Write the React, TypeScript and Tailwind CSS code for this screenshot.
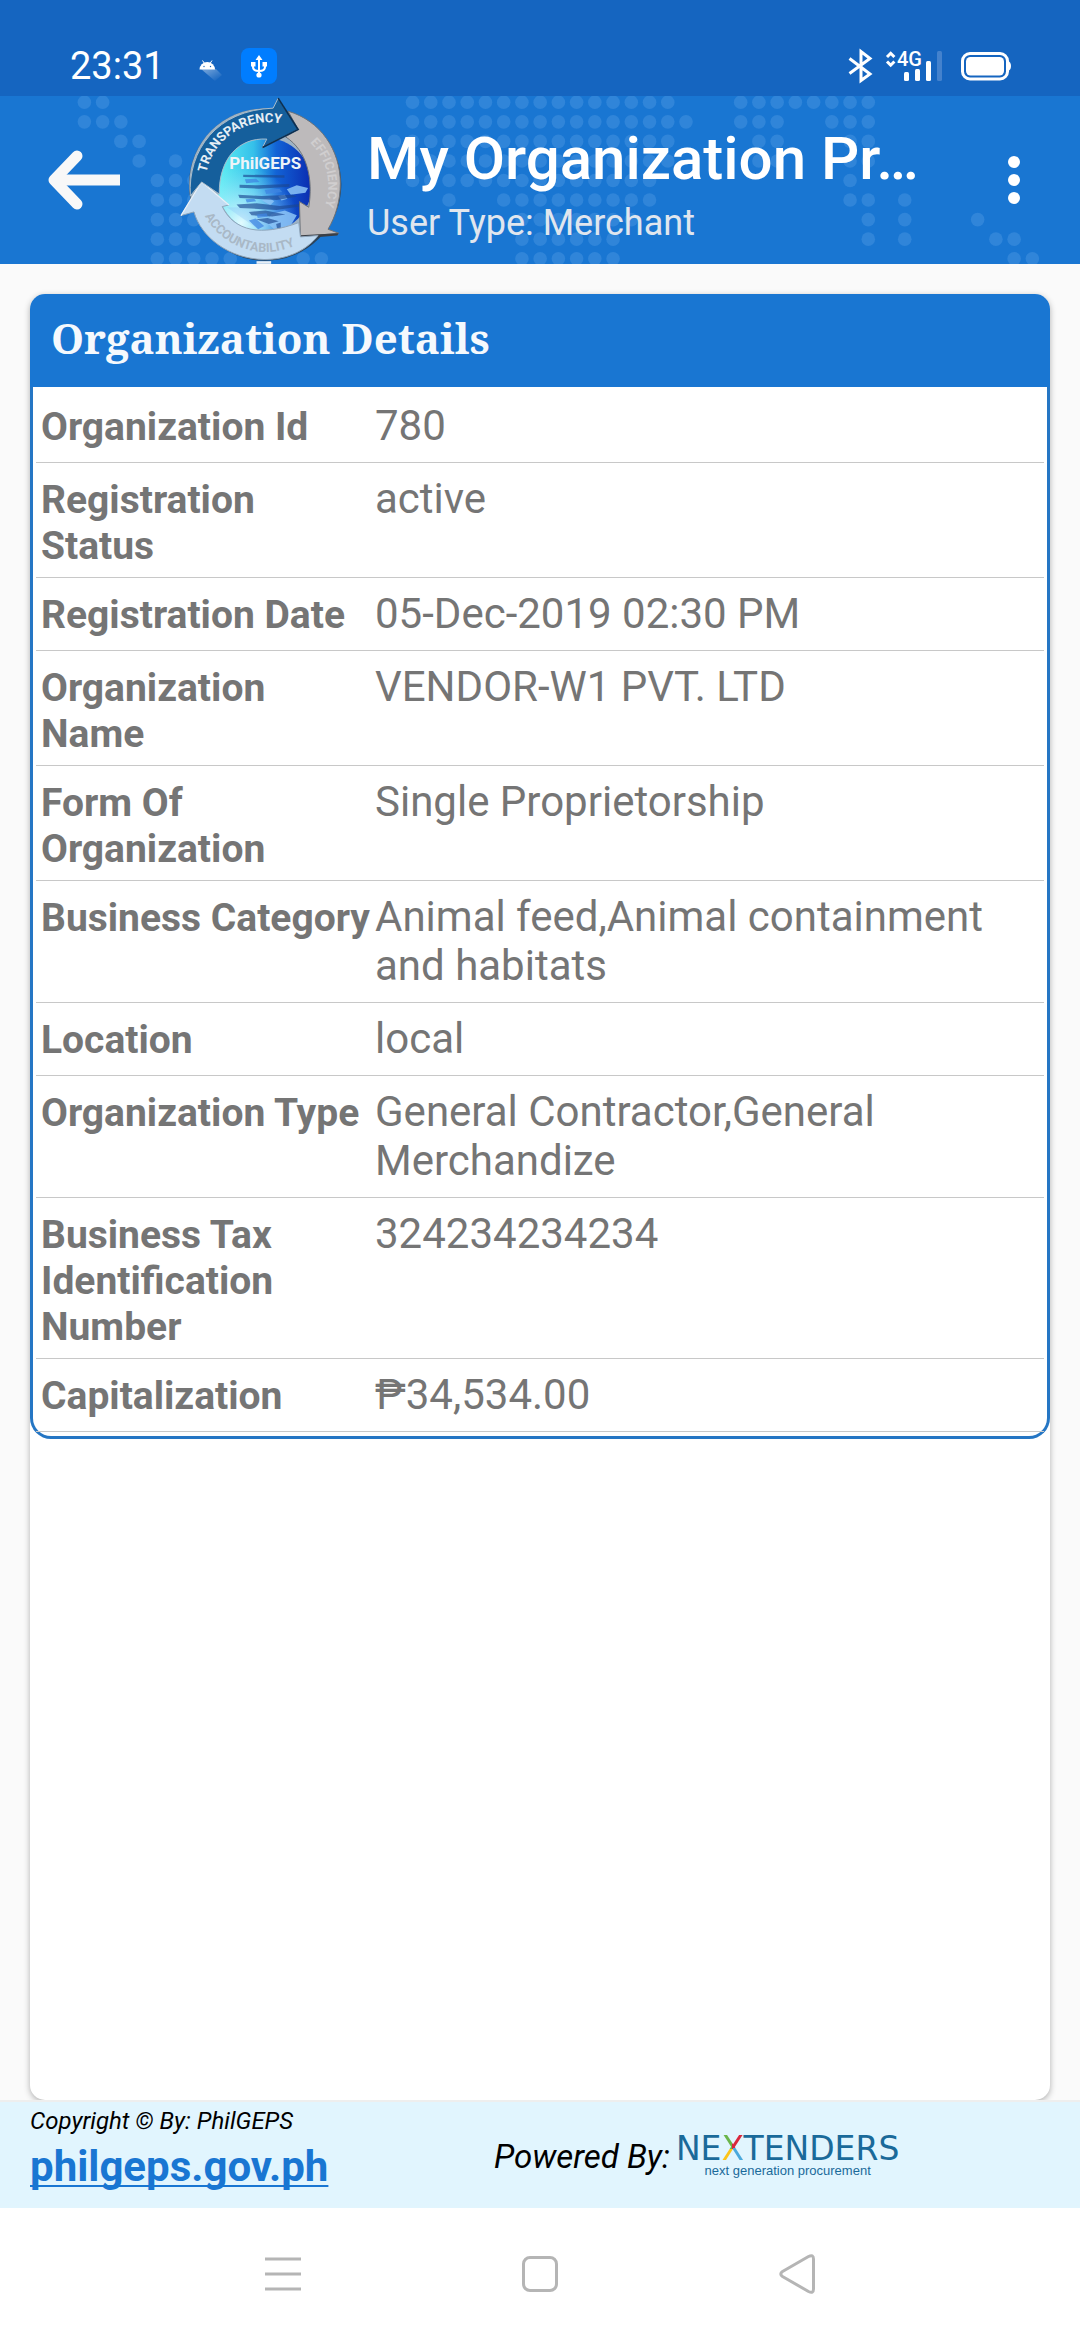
import React from "react";

type Row = { label: string; value: string };

const rows: Row[] = [
  { label: "Organization Id", value: "780" },
  { label: "Registration Status", value: "active" },
  { label: "Registration Date", value: "05-Dec-2019 02:30 PM" },
  { label: "Organization Name", value: "VENDOR-W1 PVT. LTD" },
  { label: "Form Of Organization", value: "Single Proprietorship" },
  { label: "Business Category", value: "Animal feed,Animal containment and habitats" },
  { label: "Location", value: "local" },
  { label: "Organization Type", value: "General Contractor,General Merchandize" },
  { label: "Business Tax Identification Number", value: "324234234234" },
  { label: "Capitalization", value: "₱34,534.00" },
];

// Column ranges of the dotted world map, one list per dot row.
const mapDots: [number, number][][] = [
  [[0, 1], [18, 32], [36, 43]],
  [[0, 2], [18, 33], [36, 38], [41, 43]],
  [[2, 3], [17, 32], [37, 38], [42, 43]],
  [[3, 3], [5, 5], [18, 32], [37, 38], [42, 43]],
  [[4, 6], [18, 31], [42, 42]],
  [[4, 6], [20, 20], [23, 31], [42, 43], [45, 45]],
  [[4, 6], [24, 30], [43, 43], [45, 45], [49, 49]],
  [[4, 6], [24, 29], [43, 43], [45, 45], [50, 51]],
  [[4, 8], [12, 13], [24, 29], [51, 52]],
];

function MapDots() {
  return (
    <svg
      className="absolute inset-0 h-full w-full"
      viewBox="0 0 1080 168"
      preserveAspectRatio="xMidYMid slice"
      fill="#3085d9"
      aria-hidden="true"
    >
      {mapDots.map((ranges, r) =>
        ranges.map(([from, to]) =>
          Array.from({ length: to - from + 1 }, (_, i) => (
            <circle key={`${r}-${from + i}`} cx={84.4 + (from + i) * 18.23} cy={6.3 + r * 19.55} r={6.8} />
          )),
        ),
      )}
    </svg>
  );
}

function StatusBar() {
  return (
    <div className="flex h-24 items-start justify-between bg-[#1565c0] pt-[42px] pr-[66px] pl-[70px] text-white">
      <div className="flex h-12 items-center">
        <span className="text-[38px] leading-[48px]">23:31</span>
        <svg className="ml-[34px] h-8 w-6" viewBox="0 0 24 32" aria-hidden="true">
          <defs>
            <linearGradient id="droidShade" x1="0" y1="0" x2="1" y2="1">
              <stop offset="0.2" stopColor="#fff" stopOpacity="0.35" />
              <stop offset="0.9" stopColor="#fff" stopOpacity="0" />
            </linearGradient>
          </defs>
          <path d="M2 19H17L23 25L16 31Z" fill="url(#droidShade)" />
          <path d="M0.500 19.500a7.700 7.500 0 0 1 15.500 0z" fill="#fff" />
          <path d="M3.500 10.500l2 3M13 10.500l-2 3" stroke="#fff" strokeWidth="1" />
          <circle cx="5" cy="16.500" r="0.700" fill="#1565c0" />
          <circle cx="11.500" cy="16.500" r="0.700" fill="#1565c0" />
        </svg>
        <svg className="ml-[18px] h-9 w-9" viewBox="0 0 36 36" aria-hidden="true">
          <rect width="36" height="36" rx="8" fill="#007dff" />
          <g fill="none" stroke="#fff" strokeWidth="2">
            <path d="M18 10V27M12 17v2c0 3 2.500 4 6 4s6-1 6-4v-2" />
          </g>
          <path d="M18 7l3.500 5h-7zM10 14h4.500v4.500H10zM21.500 14H26v4.500h-4.500z" fill="#fff" />
          <circle cx="18" cy="27" r="2.600" fill="#fff" />
        </svg>
      </div>
      <svg className="h-12 w-[166px]" viewBox="848 42 166 48" aria-hidden="true">
        <path d="M849.500 58.500L870 74L861 80.500V51.500L870 58.500L849.500 73.500" fill="none" stroke="#fff" strokeWidth="3" />
        <path d="M887 57l3.700-3.700L894.400 57M887 61.500l3.700 3.700l3.700-3.700" fill="none" stroke="#fff" strokeWidth="3" />
        <text x="897" y="66" fill="#fff" fontSize="20" fontWeight="500">4G</text>
        <rect x="904" y="72" width="5" height="9" rx="1.500" fill="#fff" />
        <rect x="915" y="69" width="5" height="12" rx="1.500" fill="#fff" />
        <rect x="926" y="61" width="5" height="20" rx="1.500" fill="#fff" />
        <rect x="937" y="51" width="5" height="30" rx="1.500" fill="#4482cd" />
        <rect x="962.500" y="53.500" width="45" height="25.500" rx="7.500" fill="none" stroke="#fff" strokeWidth="3" />
        <rect x="966" y="57" width="38" height="18.500" rx="4.500" fill="#fff" />
        <path d="M1008 61q3 1 3 5t-3 5z" fill="#fff" />
      </svg>
    </div>
  );
}

function SealLogo() {
  return (
    <svg className="h-[168px] w-[163px] shrink-0" viewBox="55 18 490 504" role="img" aria-label="PhilGEPS">
      <defs>
        <linearGradient id="globe" x1="0" y1="0.300" x2="1" y2="0.300">
          <stop offset="0" stopColor="#5ff0f2" />
          <stop offset="0.38" stopColor="#35c0ea" />
          <stop offset="0.62" stopColor="#1263d6" />
          <stop offset="1" stopColor="#0a2bb0" />
        </linearGradient>
        <radialGradient id="globeLight" cx="0.250" cy="0.900" r="0.600">
          <stop offset="0" stopColor="#e2fbff" />
          <stop offset="1" stopColor="#9fe6ff" stopOpacity="0" />
        </radialGradient>
        <path id="sealTop" d="M134 248A190 190 0 0 1 380 106" />
        <path id="sealRight" d="M446 158A180 180 0 0 1 478 375" />
        <path id="sealBottom" d="M130 378A208 208 0 0 0 430 450" />
      </defs>
      <path d="M285 514h44v8h-44z" fill="#e8eef4" />
      <circle cx="311" cy="284" r="229" fill="#2c4257" />
      <circle cx="309" cy="281" r="226" fill="#9fb3c4" />
      <circle cx="310" cy="285" r="142" fill="url(#globe)" />
      <circle cx="310" cy="285" r="142" fill="url(#globeLight)" />
      <g fill="#8cc4f7" opacity="0.850">
        <path d="M196 352l94 66 26-8 22-18-40-28-60-12z" opacity="0.400" />
        <path d="M376 298l30-12 34 8-8 14-44 6zM330 372l40-10 36 14-20 34-44 12-26-24z" />
        <path d="M300 330l24-6 14 10-12 12zM350 318l20-4 8 12-18 6z" />
      </g>
      <g fill="#1c4690" opacity="0.650">
        <path d="M245 254l124 2v7l-124-2zM234 284l54 2 96-4v8l-92 6-58-3zM230 314l70 4 94-4 12 6-60 10-112-6zM225 344l60-4 70 8 60-6v8l-70 10-110-6zM262 366l50-4 60 12-40 6-62-4zM284 388l34-4 34 10-30 8zM344 402l14-4v20l-10 4z" />
      </g>
      <g fill="#3f86e2" opacity="0.750">
        <path d="M250 268l34-2 10 10-40 4zM310 300l44-4 8 10-48 6zM252 328l26-2 6 8-28 4zM285 374l30-4 4 10-30 4zM262 392l20-6 26 22-18 10z" />
      </g>
      <path d="M380 63C478 92 537 180 537 280C537 332 523 380 500 418L532 430L417 441L414 335L442 352C456 268 438 182 372 140L410 118Z" fill="#bdbabb" stroke="#6d7279" strokeWidth="3" />
      <path d="M417 436L532 430L528 437L420 446Z" fill="#3b3f46" />
      <path d="M120 275L202 345L182 350C218 425 300 440 412 398L417 441L470 437C430 488 370 509 308 509C200 507 118 440 97 366L58 377Z" fill="#c3dcf2" stroke="#8fa5ba" strokeWidth="3" />
      <path d="M58 377L120 275L202 345" fill="none" stroke="#e9f2fa" strokeWidth="4" />
      <path d="M86 318C78 180 165 60 335 54L350 24L410 118L303 172L316 147C232 142 172 205 173 312L120 276Z" fill="#155f9c" stroke="#a9bccb" strokeWidth="3" />
      <path d="M350 24L410 118L303 172" fill="none" stroke="#0b2f52" strokeWidth="5" />
      <text fill="#e6eef5" fontSize="39" fontWeight="700">
        <textPath href="#sealTop">TRANSPARENCY</textPath>
      </text>
      <text fill="#d0cecf" fontSize="38" fontWeight="700">
        <textPath href="#sealRight">EFFICIENCY</textPath>
      </text>
      <text fill="#a9b8c6" fontSize="38" fontWeight="700">
        <textPath href="#sealBottom">ACCOUNTABILITY</textPath>
      </text>
      <text x="311" y="236" textAnchor="middle" fill="#eef4f8" fontSize="51" fontWeight="700">
        PhilGEPS
      </text>
    </svg>
  );
}

function AppBar() {
  return (
    <header className="relative h-[168px] bg-[#1976d2]">
      <MapDots />
      <div className="relative flex h-full items-center pr-10">
        <button type="button" aria-label="Back" className="ml-12 shrink-0">
          <svg className="h-[60px] w-[72px]" viewBox="0 0 72 60" fill="none" stroke="#f8f8f8" strokeWidth="11" aria-hidden="true">
            <path d="M29 6L6 30L29 54" strokeLinecap="round" strokeLinejoin="round" />
            <path d="M10 30H72" />
          </svg>
        </button>
        <div className="ml-[60px] flex shrink-0">
          <SealLogo />
        </div>
        <div className="ml-6 flex min-w-0 flex-1 flex-col pt-4">
          <h1 className="truncate text-[60px] leading-[70px] font-medium text-white">My Organization Pr…</h1>
          <p className="text-[36px] leading-[58px] text-[#e0e6ee]">User Type: Merchant</p>
        </div>
        <button type="button" aria-label="More options" className="flex w-[52px] shrink-0 flex-col items-center gap-[6px]">
          <span className="size-3 rounded-full bg-white" />
          <span className="size-3 rounded-full bg-white" />
          <span className="size-3 rounded-full bg-white" />
        </button>
      </div>
    </header>
  );
}

function Details() {
  return (
    <section>
      <h2 className="rounded-t-[15px] bg-[#1976d2] px-[21px] pt-[15px] pb-5 font-['Noto_Serif','Droid_Serif','Liberation_Serif',serif] text-[42px] leading-[58px] font-bold text-[#f5f9fd]">
        Organization Details
      </h2>
      <div className="rounded-b-[21px] border-[3px] border-t-0 border-[#2576c4] p-[3px] pb-1">
        <table className="w-full table-fixed border-collapse text-[#757575]">
          <colgroup>
            <col className="w-[339px]" />
            <col />
          </colgroup>
          <tbody>
            {rows.map((row) => (
              <tr key={row.label} className="border-b border-[#c8c8c8] align-top">
                <th scope="row" className="pt-[14px] pb-2 pl-[5px] text-left text-[39px] leading-[46px] font-bold">
                  {row.label}
                </th>
                <td className="pt-[11px] pr-4 pb-3 text-[42px] leading-[49px]">{row.value}</td>
              </tr>
            ))}
          </tbody>
        </table>
      </div>
    </section>
  );
}

function NextendersLogo() {
  return (
    <div className="flex flex-col items-center text-[#1a6a9a]">
      <span className="font-['DejaVu_Sans',sans-serif] text-[33px] leading-[28px]">
        NE
        <span className="bg-[conic-gradient(#d9263c_25%,#4ba9dc_25%_50%,#fcc419_50%_75%,#6ab54a_75%)] bg-clip-text text-transparent">X</span>
        TENDERS
      </span>
      <span className="font-['Liberation_Sans',sans-serif] text-[13px] leading-4">next generation procurement</span>
    </div>
  );
}

function Footer() {
  return (
    <footer className="relative grid h-[108px] grid-cols-[464px_1fr] border-t-2 border-[#eeeeee] bg-[#e1f5fe] pl-[30px]">
      <div className="flex flex-col items-start pt-1">
        <p className="text-[24px] leading-[30px] text-black italic">Copyright © By: PhilGEPS</p>
        <a
          href="https://philgeps.gov.ph"
          className="text-[42px] leading-[62px] font-bold text-[#1976d2] underline decoration-2 underline-offset-[4px] [text-decoration-skip-ink:none]"
        >
          philgeps.gov.ph
        </a>
      </div>
      <div className="flex items-center gap-[6px] pt-1">
        <p className="text-[33px] leading-[40px] whitespace-nowrap text-black italic">Powered By:</p>
        <NextendersLogo />
      </div>
    </footer>
  );
}

function SystemNav() {
  return (
    <nav className="flex h-[132px] items-center justify-between bg-white px-[24%]" aria-label="System navigation">
      <button type="button" aria-label="Recent apps" className="flex size-12 items-center justify-center">
        <svg className="h-9 w-9" viewBox="0 0 36 36" stroke="#b5b5b5" strokeWidth="3" aria-hidden="true">
          <path d="M0 3H36M0 18H36M0 33H36" />
        </svg>
      </button>
      <button type="button" aria-label="Home" className="flex size-12 items-center justify-center">
        <span className="size-9 rounded-[8px] border-[3px] border-[#b5b5b5]" />
      </button>
      <button type="button" aria-label="Back" className="flex size-12 items-center justify-center">
        <svg className="h-10 w-9" viewBox="0 0 36 40" fill="none" stroke="#b5b5b5" strokeWidth="3" strokeLinejoin="round" aria-hidden="true">
          <path d="M29.500 2.500Q34.500 0 34.500 5V35Q34.500 40 29.500 37.500L3.500 22.500Q0 20 3.500 17.500Z" />
        </svg>
      </button>
    </nav>
  );
}

export default function App() {
  return (
    <div className="flex min-h-screen flex-col bg-[#fafafa] font-['Roboto',sans-serif]">
      <StatusBar />
      <AppBar />
      <main className="flex flex-1 flex-col px-[30px] pt-[30px]">
        <div className="flex-1 rounded-[15px] bg-white shadow-[0_2px_6px_rgba(0,0,0,0.3)]">
          <Details />
        </div>
      </main>
      <Footer />
      <SystemNav />
    </div>
  );
}
